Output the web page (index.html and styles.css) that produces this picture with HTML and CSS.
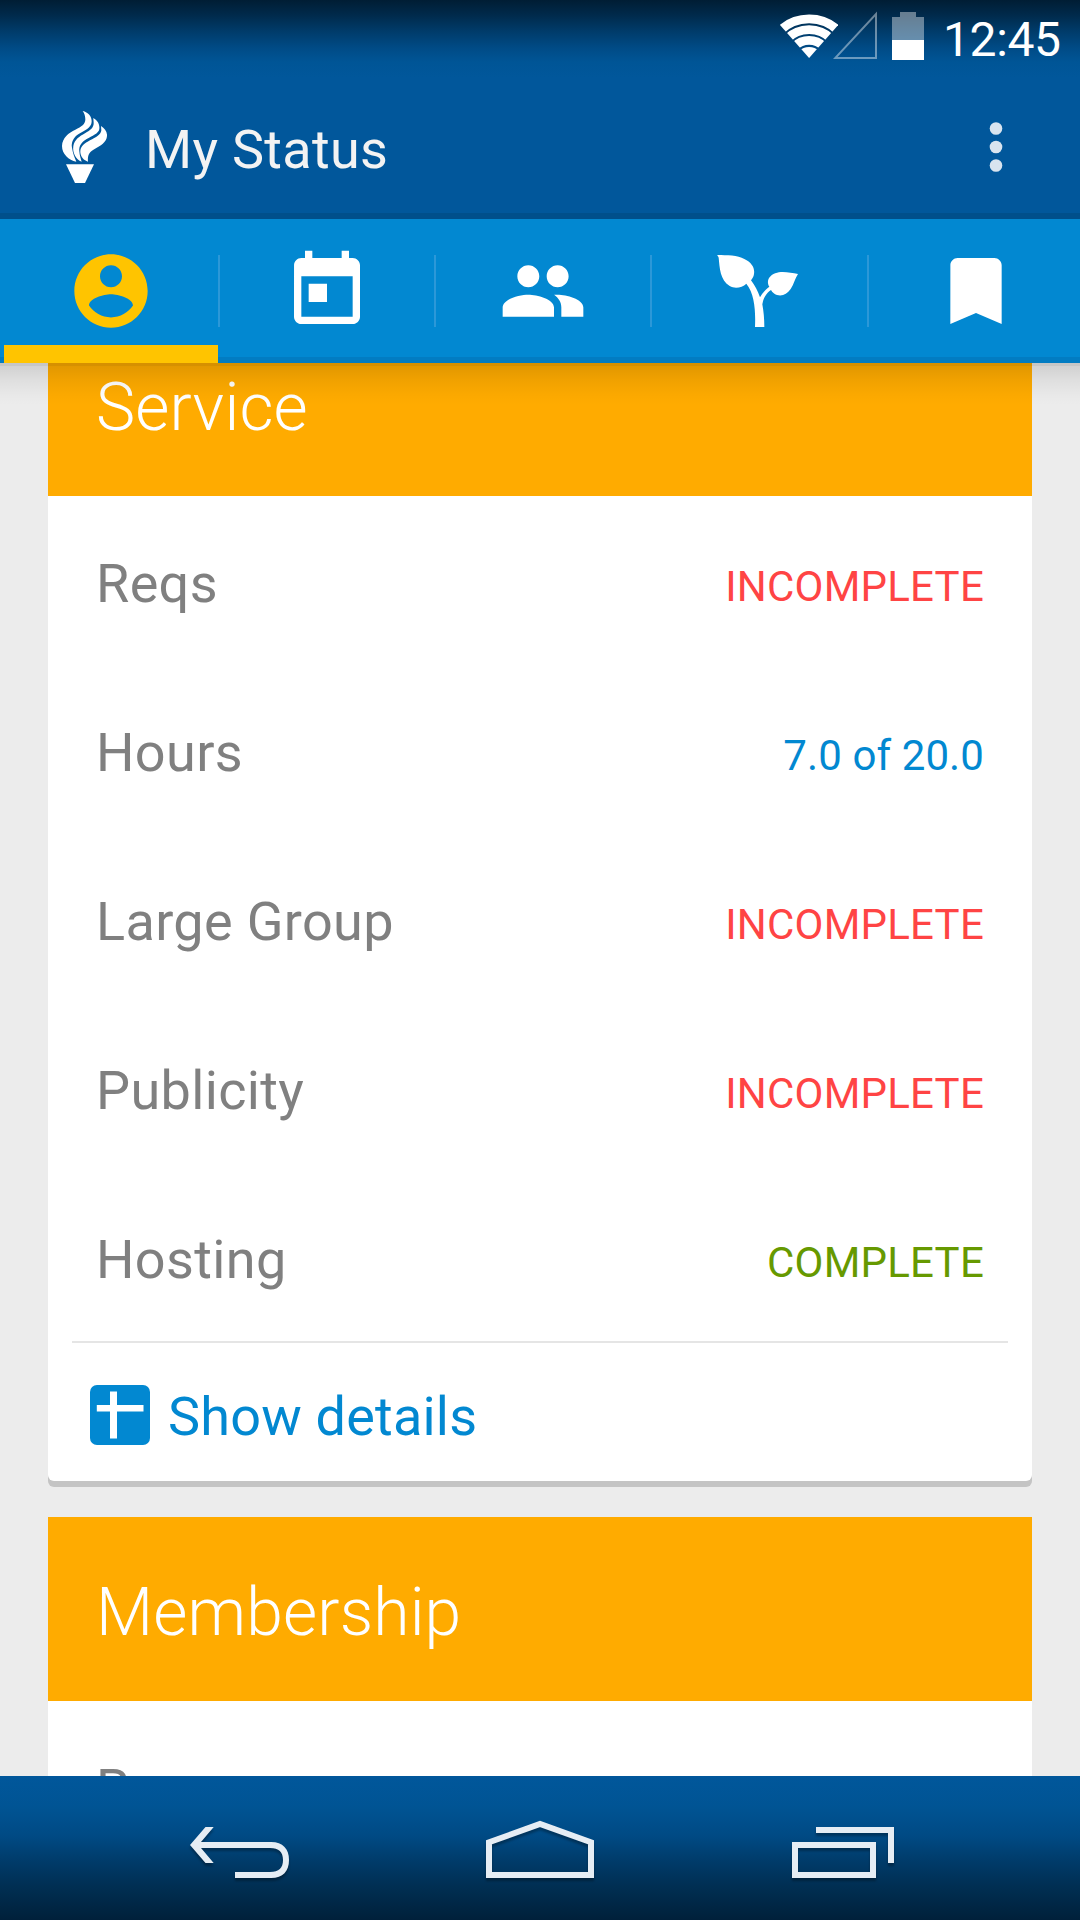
FILE: index.html
```html
<!DOCTYPE html>
<html lang="en">
<head>
<meta charset="utf-8">
<title>My Status</title>
<link rel="stylesheet" href="styles.css">
</head>
<body>
<div class="screen">
  <header class="top">
    <div class="status-bar">
      <svg class="wifi" viewBox="0 0 58 48" width="58" height="48">
        <clipPath id="wedge"><path d="M29.1 46L-3.5 9V0H61.7V9z"/></clipPath>
        <g clip-path="url(#wedge)" fill="none" stroke="#fff" stroke-width="8.8">
          <circle cx="29.1" cy="49.2" r="42.3"/>
          <circle cx="29.1" cy="49.2" r="31.5"/>
          <circle cx="29.1" cy="49.2" r="20.8"/>
          <circle cx="29.1" cy="49.2" r="14.3" fill="#fff" stroke="none"/>
        </g>
      </svg>
      <svg class="signal" viewBox="0 0 44 48" width="44" height="48"><path d="M2.2 47H43V3z" fill="none" stroke="#fff" stroke-opacity=".42" stroke-width="2"/></svg>
      <svg class="battery" viewBox="0 0 32 48" width="32" height="48"><path d="M0 5h8V0h16v5h8v23H0z" fill="#fff" fill-opacity=".4"/><path d="M0 28h32v20H0z" fill="#fff"/></svg>
      <span class="clock">12:45</span>
    </div>
    <div class="action-bar">
      <svg class="torch" viewBox="36 33 135 216" width="45" height="72" fill="#fff">
        <path d="M98 33C114 36 126 50 125 65C124 84 103 91 86 102C70 112 63 128 66 143C68 159 74 172 79 185C56 181 36 162 36 138C37 113 56 98 76 89C95 80 106 73 106 58C106 48 103 39 98 33z"/>
        <path d="M130 54C142 61 150 73 148 87C146 101 126 108 110 117C94 126 86 139 88 154C89 166 92 176 95 185C77 179 67 158 70 138C73 119 89 109 105 100C122 91 131 82 131 70C131 63 130 59 130 54z"/>
        <path d="M153 78C164 85 172 95 171 108C170 126 151 138 134 147C118 155 112 166 114 185C102 182 92 171 91 157C90 139 103 131 120 121C138 112 153 104 154 91C154 86 153 82 153 78z"/>
        <path d="M48 193H132L105 249H75z"/>
      </svg>
      <h1 class="title">My Status</h1>
      <svg class="overflow" viewBox="0 0 14 52" width="14" height="52" fill="#d9e4ef"><circle cx="7" cy="7.5" r="6.3"/><circle cx="7" cy="26" r="6.3"/><circle cx="7" cy="44.5" r="6.3"/></svg>
    </div>
  </header>
  <nav class="tabs">
    <div class="tab active"><svg viewBox="0 0 24 24"><path d="M12 2C6.48 2 2 6.48 2 12s4.48 10 10 10 10-4.48 10-10S17.52 2 12 2zm0 3c1.66 0 3 1.34 3 3s-1.34 3-3 3-3-1.34-3-3 1.34-3 3-3zm0 14.2c-2.5 0-4.71-1.28-6-3.22.03-1.99 4-3.08 6-3.08 1.99 0 5.97 1.09 6 3.08-1.29 1.94-3.5 3.22-6 3.22z"/></svg></div>
    <div class="tab"><svg viewBox="0 0 24 24"><path d="M19 3h-1V1h-2v2H8V1H6v2H5c-1.11 0-1.99.9-1.99 2L3 19c0 1.1.89 2 2 2h14c1.1 0 2-.9 2-2V5c0-1.1-.9-2-2-2zm0 16H5V8h14v11zM7 10h5v5H7z"/></svg></div>
    <div class="tab"><svg viewBox="0 0 24 24"><path d="M16 11c1.66 0 2.99-1.34 2.99-3S17.66 5 16 5c-1.66 0-3 1.34-3 3s1.34 3 3 3zm-8 0c1.66 0 2.99-1.34 2.99-3S9.66 5 8 5C6.34 5 5 6.34 5 8s1.34 3 3 3zm0 2c-2.33 0-7 1.17-7 3.5V19h14v-2.5c0-2.33-4.67-3.5-7-3.5zm8 0c-.29 0-.62.02-.97.05 1.16.84 1.97 1.97 1.97 3.45V19h6v-2.5c0-2.33-4.67-3.5-7-3.5z"/></svg></div>
    <div class="tab"><svg viewBox="47 21 264 264"><path d="M51 45C80 46 112 45 132 57C154 68 164 83 161 102C160 110 156 116 152 121C164 137 172 152 179 172C187 158 197 147 207 140C202 132 201 122 206 114C216 100 232 96 247 96C263 96 278 99 293 102C284 115 281 133 271 147C260 163 246 169 230 165C222 163 216 157 212 150C197 160 189 175 186 193C190 215 192 237 192 261H164C166 213 163 161 138 131C125 143 104 147 88 138C59 120 58 83 55 53C54 49 51 49 51 45z"/></svg></div>
    <div class="tab"><svg viewBox="0 0 24 24"><path d="M17 3H7c-1.1 0-1.99.9-1.99 2L5 21l7-3 7 3V5c0-1.1-.9-2-2-2z"/></svg></div>
  </nav>
  <main class="content">
    <section class="card">
      <h2 class="card-title">Service</h2>
      <div class="row"><span>Reqs</span><span class="value bad">INCOMPLETE</span></div>
      <div class="row"><span>Hours</span><span class="value info">7.0 of 20.0</span></div>
      <div class="row"><span>Large Group</span><span class="value bad">INCOMPLETE</span></div>
      <div class="row"><span>Publicity</span><span class="value bad">INCOMPLETE</span></div>
      <div class="row"><span>Hosting</span><span class="value good">COMPLETE</span></div>
      <div class="details">
        <svg viewBox="0 0 60 60" width="60" height="60"><rect width="60" height="60" rx="7" fill="#0288d1"/><path d="M20 6.500h7V20h26.500v6.500H27v27h-7v-27H6.800V20H20z" fill="#fff"/></svg>
        <span class="details-label">Show details</span>
      </div>
    </section>
    <section class="card">
      <h2 class="card-title">Membership</h2>
      <div class="row"><span>Reqs</span><span class="value bad">INCOMPLETE</span></div>
    </section>
  </main>
  <footer class="nav-bar">
    <svg viewBox="190 1815 99 70" width="99" height="70"><path d="M190 1845L205.500 1827H213.700L201 1842H271C283 1842 289 1849 289 1860S283 1878 271 1878H235V1872H270C279 1872 283 1868 283 1860S279 1848 270 1848H201L213.700 1863H205.500z" fill="#e6edf4"/></svg>
    <svg viewBox="486 1815 109 70" width="109" height="70"><path d="M489 1875V1842.300L540 1824L591 1842.300V1875z" fill="none" stroke="#e6edf4" stroke-width="6"/></svg>
    <svg viewBox="792 1815 102 70" width="102" height="70"><path d="M795 1845H873V1875H795zM816 1830H891V1863" fill="none" stroke="#e6edf4" stroke-width="6"/></svg>
  </footer>
</div>
</body>
</html>
```
FILE: styles.css
```css
* { box-sizing: border-box; }

body {
  margin: 0;
  font-family: Roboto, "Noto Sans", sans-serif;
}

.screen {
  width: 1080px;
  height: 1920px;
  display: flex;
  flex-direction: column;
  overflow: hidden;
  background: #ececec;
}

.top {
  flex: none;
  height: 219px;
  border-bottom: 6px solid #004f8b;
  background: linear-gradient(#001d34 0, #002a4b 15px, #003c6b 32px, #004b86 48px, #005596 62px, #01579b 78px);
}

.status-bar {
  display: flex;
  align-items: flex-start;
  height: 75px;
  padding: 12px 19px 0 0;
  justify-content: flex-end;
}

.signal { margin: -1px 15px 0 -5px; }

.clock {
  width: 118px;
  margin: -1px 0 0 19px;
  font-size: 48px;
  line-height: 58px;
  letter-spacing: -.4px;
  color: #fff;
}

.action-bar {
  display: flex;
  align-items: center;
  height: 144px;
  padding: 0 77px 0 62px;
}

.title {
  flex: 1;
  margin: 6px 0 0 38px;
  font-size: 54px;
  font-weight: 400;
  line-height: 64px;
  letter-spacing: .3px;
  color: #f3f3f3;
}

.tabs {
  position: relative;
  z-index: 1;
  flex: none;
  display: grid;
  grid-template-columns: 216px 216px 216px 217px 216px;
  height: 144px;
  padding-left: 3px;
  background: linear-gradient(#0288d1 138px, #027cc2 138px);
}

/* soft shadow cast over the scrolling cards */
.tabs::after {
  content: "";
  position: absolute;
  top: 144px;
  left: 0;
  right: 0;
  height: 42px;
  background: linear-gradient(rgba(0,0,0,.16) 3px, rgba(0,0,0,.115) 3px, rgba(0,0,0,.055) 18px, rgba(0,0,0,.015) 32px, transparent);
}

.tab {
  position: relative;
  display: grid;
  place-items: center;
}

.tab svg {
  width: 88px;
  height: 88px;
  fill: #fff;
}

.tab.active svg { fill: #ffc400; }

.tab:not(:last-child)::before {
  content: "";
  position: absolute;
  top: 36px;
  right: -1px;
  width: 2px;
  height: 72px;
  background: #2c98d8;
}

.tab.active::after {
  content: "";
  position: absolute;
  left: 1px;
  right: 1px;
  bottom: 0;
  height: 18px;
  background: #ffc400;
}

.content {
  flex: 1;
  min-height: 0;
  display: flex;
  flex-direction: column;
  gap: 36px;
  margin-top: -51px;
  padding: 0 48px;
  overflow: hidden;
}

.card {
  flex: none;
  background: #fff;
  border-radius: 0 0 6px 6px;
  box-shadow: 0 6px 0 #c4c4c4;
}

.card-title {
  height: 184px;
  margin: 0;
  padding: 7px 48px 0;
  background: #ffab00;
  color: #fff;
  font-size: 66px;
  font-weight: 300;
  line-height: 177px;
  letter-spacing: .15px;
}

.row {
  display: flex;
  align-items: center;
  justify-content: space-between;
  height: 169px;
  padding: 5px 48px 0;
  color: #808080;
  font-size: 54px;
  letter-spacing: .35px;
}

.value {
  font-size: 42px;
  padding-top: 7px;
  letter-spacing: .22px;
}

.bad { color: #ff4444; }
.info { color: #0288d1; letter-spacing: .1px; }
.good { color: #669900; }

.details {
  display: flex;
  align-items: center;
  gap: 18px;
  height: 140px;
  margin: 0 24px;
  padding: 6px 18px 0;
  border-top: 2px solid #e5e5e5;
  color: #0288d1;
  font-size: 54px;
  letter-spacing: .2px;
}

.details-label { padding-top: 3px; }

.nav-bar {
  flex: none;
  display: flex;
  align-items: flex-start;
  justify-content: space-between;
  height: 144px;
  padding: 39px 186px 0 190px;
  background: linear-gradient(#01579b 0, #005494 30px, #004a84 60px, #003c6b 84px, #002f53 110px, #00203a 144px);
}

.nav-bar svg { filter: drop-shadow(0 3px 1px rgba(0, 0, 0, .3)); }
```
